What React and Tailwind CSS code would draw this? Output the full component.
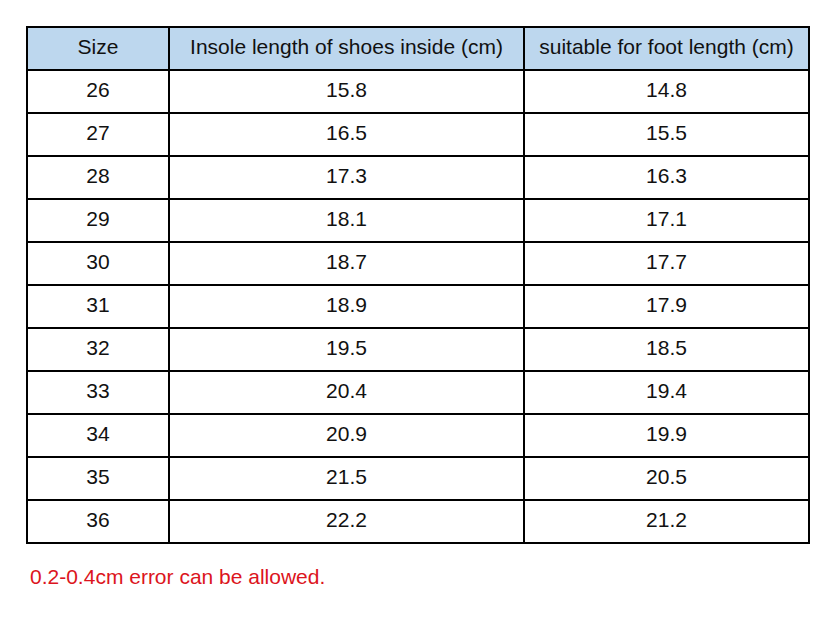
import { Fragment } from "react";

const rows = [
  ["26", "15.8", "14.8"],
  ["27", "16.5", "15.5"],
  ["28", "17.3", "16.3"],
  ["29", "18.1", "17.1"],
  ["30", "18.7", "17.7"],
  ["31", "18.9", "17.9"],
  ["32", "19.5", "18.5"],
  ["33", "20.4", "19.4"],
  ["34", "20.9", "19.9"],
  ["35", "21.5", "20.5"],
  ["36", "22.2", "21.2"],
];

const Cell = ({ children, className = "" }) => (
  <div
    className={`h-[43px] pb-[3px] flex items-center justify-center border-r-2 border-b-2 border-black ${className}`}
  >
    {children}
  </div>
);

export default function App() {
  return (
    <div
      className="w-[830px] h-[623px] bg-white pt-[26px] pl-[26px] text-[21px] text-[#111]"
      style={{ fontFamily: "'Liberation Sans', Arial, sans-serif" }}
    >
      {/* Size chart */}
      <div className="w-[784px] grid grid-cols-[142px_355px_285px] border-l-2 border-t-2 border-black">
        <Cell className="bg-[#bdd7ee]">Size</Cell>
        <Cell className="bg-[#bdd7ee]">Insole length of shoes inside (cm)</Cell>
        <Cell className="bg-[#bdd7ee]">suitable for foot length (cm)</Cell>
        {rows.map((r) => (
          <Fragment key={r[0]}>
            <Cell>{r[0]}</Cell>
            <Cell>{r[1]}</Cell>
            <Cell>{r[2]}</Cell>
          </Fragment>
        ))}
      </div>

      <p className="mt-[17px] pl-[4px] text-[#dc1420]">0.2-0.4cm error can be allowed.</p>
    </div>
  );
}
